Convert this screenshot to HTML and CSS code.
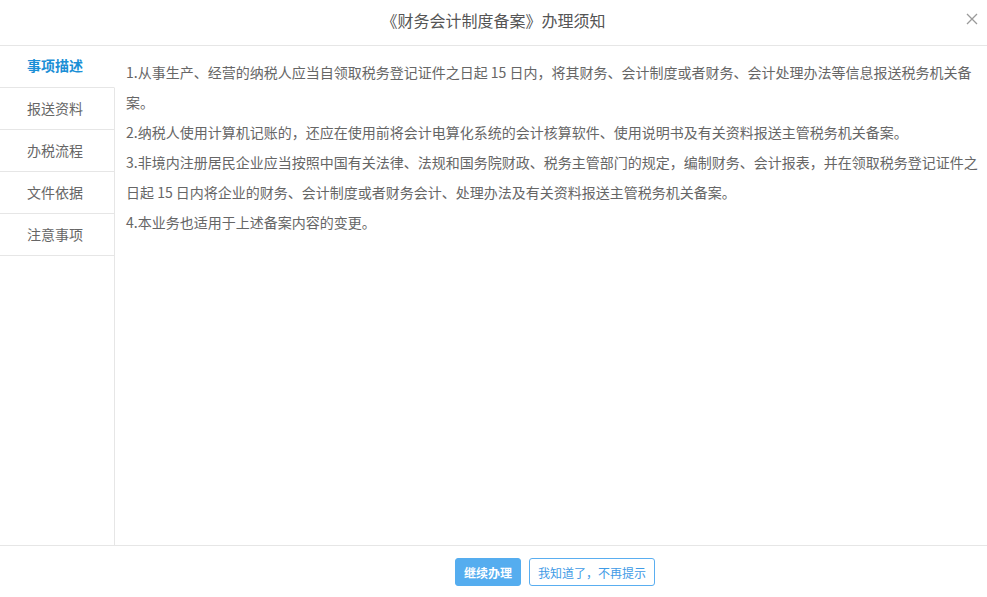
FILE: index.html
```html
<!DOCTYPE html>
<html lang="zh-CN">
<head>
<meta charset="utf-8">
<title>《财务会计制度备案》办理须知</title>
<link rel="stylesheet" href="styles.css">
</head>
<body>
<div class="dialog">
  <header class="dialog-header">
    <h1 class="dialog-title">《财务会计制度备案》办理须知</h1>
    <button class="close-btn" aria-label="关闭">
      <svg width="12" height="12" viewBox="0 0 12 12"><path d="M1 1L11 11M11 1L1 11" stroke="#9a9a9a" stroke-width="1.3" fill="none"/></svg>
    </button>
  </header>
  <div class="dialog-body">
    <nav class="side-nav">
      <div class="nav-item active">事项描述</div>
      <div class="nav-item">报送资料</div>
      <div class="nav-item">办税流程</div>
      <div class="nav-item">文件依据</div>
      <div class="nav-item">注意事项</div>
      <div class="nav-fill"></div>
    </nav>
    <main class="content">
      <p>1.从事生产、经营的纳税人应当自领取税务登记证件之日起 15 日内，将其财务、会计制度或者财务、会计处理办法等信息报送税务机关备案。</p>
      <p>2.纳税人使用计算机记账的，还应在使用前将会计电算化系统的会计核算软件、使用说明书及有关资料报送主管税务机关备案。</p>
      <p>3.非境内注册居民企业应当按照中国有关法律、法规和国务院财政、税务主管部门的规定，编制财务、会计报表，并在领取税务登记证件之日起 15 日内将企业的财务、会计制度或者财务会计、处理办法及有关资料报送主管税务机关备案。</p>
      <p>4.本业务也适用于上述备案内容的变更。</p>
    </main>
  </div>
  <footer class="dialog-footer">
    <button class="btn btn-primary">继续办理</button>
    <button class="btn btn-outline">我知道了，不再提示</button>
  </footer>
</div>
</body>
</html>
```
FILE: styles.css
```css
html, body {
  margin: 0;
  padding: 0;
  background: #fff;
}
body {
  font-family: "Noto Sans CJK SC", "Noto Sans", "Liberation Sans", sans-serif;
  color: #666;
}
.dialog {
  width: 987px;
  height: 597px;
  display: flex;
  flex-direction: column;
  box-sizing: border-box;
}
.dialog-header {
  height: 45px;
  flex: none;
  border-bottom: 1px solid #e6e6e6;
  display: flex;
  align-items: center;
  justify-content: center;
  position: relative;
}
.dialog-title {
  margin: 0;
  font-size: 16px;
  font-weight: normal;
  color: #555;
  line-height: 20px;
  padding-bottom: 6px;
}
.close-btn {
  position: absolute;
  right: 8px;
  top: 12px;
  width: 14px;
  height: 14px;
  padding: 0;
  border: 0;
  background: none;
  display: flex;
  align-items: center;
  justify-content: center;
}
.dialog-body {
  flex: 1;
  display: flex;
  min-height: 0;
}
.side-nav {
  width: 115px;
  flex: none;
  display: flex;
  flex-direction: column;
}
.nav-item {
  height: 41px;
  border-bottom: 1px solid #e6e6e6;
  border-right: 1px solid #e6e6e6;
  font-size: 14px;
  line-height: 40px;
  padding-left: 27px;
  color: #666;
}
.nav-item.active {
  color: #1b8fd6;
  font-weight: bold;
  border-right-color: transparent;
  line-height: 39px;
}
.nav-fill {
  flex: 1;
  border-right: 1px solid #e6e6e6;
}
.content {
  flex: 1;
  padding: 11px 6px 0 11px;
  font-size: 14px;
  line-height: 30px;
  color: #666;
}
.content p {
  margin: 0;
}
.dialog-footer {
  height: 50px;
  flex: none;
  border-top: 1px solid #e6e6e6;
  display: flex;
  align-items: center;
  justify-content: center;
  gap: 8px;
  padding-left: 123px;
  padding-top: 1px;
}
.btn {
  height: 28px;
  font-family: inherit;
  font-size: 12px;
  border-radius: 3px;
  padding: 0 8px;
  box-sizing: border-box;
  cursor: pointer;
}
.btn-primary {
  width: 66px;
  background: #55adef;
  border: 1px solid #55adef;
  color: #fff;
  font-weight: bold;
}
.btn-outline {
  width: 126px;
  background: #fff;
  border: 1px solid #5aaef0;
  color: #3f9be6;
}
```
